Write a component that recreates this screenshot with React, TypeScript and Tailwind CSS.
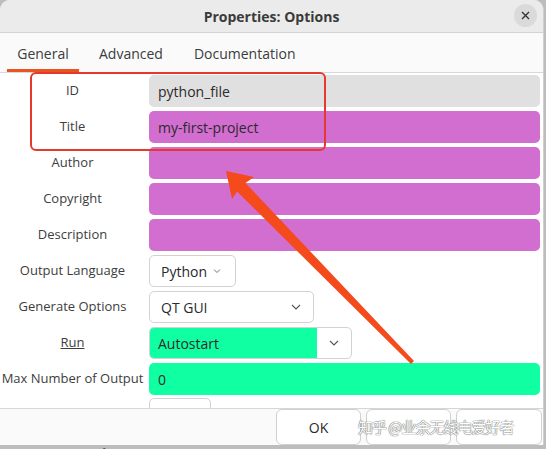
const labelFont = { fontFamily: '"Open Sans", "Noto Sans", sans-serif' };

function Chevron({ className = "" }: { className?: string }) {
  return (
    <svg width="10" height="6" viewBox="0 0 10 6" className={className}>
      <polyline points="1,1 5,5 9,1" fill="none" stroke="#555" strokeWidth="1.1" />
    </svg>
  );
}

function Row({ label, underline, children }: { label: string; underline?: boolean; children: React.ReactNode }) {
  return (
    <div className="flex h-[36px] items-center">
      <div className="w-[149px] shrink-0 pr-[4px] text-center text-[13px] text-[#3d3d3d]">
        <span className={underline ? "underline" : ""}>{label}</span>
      </div>
      <div className="flex h-full flex-1 items-center pr-[3px]">{children}</div>
    </div>
  );
}

function Field({ value, color }: { value?: string; color: string }) {
  return (
    <div className={`flex h-[32px] w-full items-center rounded-[5px] px-[9px] text-[14px] text-[#2a2a2a] ${color}`}>
      {value}
    </div>
  );
}

export default function App() {
  return (
    <div className="relative h-[449px] w-[546px] overflow-hidden bg-[#bdbdbd]" style={labelFont}>
      <div className="flex h-[445px] w-[544px] flex-col overflow-hidden rounded-t-[10px] border-r border-[#cfcfcf] bg-[#fafafa]">
        {/* title bar */}
        <div className="relative flex h-[33px] shrink-0 items-center justify-center border-b border-[#d2d2d2] bg-[#ebebeb]">
          <span className="text-[14px] font-bold text-[#3a3a3a]">Properties: Options</span>
          <div className="absolute right-[6px] top-[4px] flex h-[23px] w-[23px] items-center justify-center rounded-full bg-[#dadada]">
            <svg width="9" height="9" viewBox="0 0 9 9">
              <path d="M1 1 L8 8 M8 1 L1 8" stroke="#333" strokeWidth="1.4" />
            </svg>
          </div>
        </div>

        {/* tabs */}
        <div className="flex h-[40px] shrink-0 items-stretch border-b border-[#d8d8d8] bg-[#fafafa] text-[14px] text-[#3c3c3c]">
          <div className="ml-[7px] flex w-[72px] items-center justify-center border-b-[3px] border-[#e95420] pt-[4px]">General</div>
          <div className="ml-[20px] flex items-center pt-[1px]">Advanced</div>
          <div className="ml-[31px] flex items-center pt-[1px]">Documentation</div>
        </div>

        {/* form */}
        <div className="h-[335px] shrink-0 overflow-hidden bg-white">
          <Row label="ID">
            <Field value="python_file" color="bg-[#e0e0e0]" />
          </Row>
          <Row label="Title">
            <Field value="my-first-project" color="bg-[#d26ed0]" />
          </Row>
          <Row label="Author">
            <Field color="bg-[#d26ed0]" />
          </Row>
          <Row label="Copyright">
            <Field color="bg-[#d26ed0]" />
          </Row>
          <Row label="Description">
            <Field color="bg-[#d26ed0]" />
          </Row>
          <Row label="Output Language">
            <div className="flex h-[32px] w-[87px] items-center gap-[5px] rounded-[5px] border border-[#d2d2d2] bg-white pl-[11px] text-[14px] text-[#2a2a2a]">
              Python
              <Chevron className="scale-75" />
            </div>
          </Row>
          <Row label="Generate Options">
            <div className="flex h-[32px] w-[165px] items-center justify-between rounded-[5px] border border-[#d2d2d2] bg-white pl-[11px] pr-[12px] text-[14px] text-[#2a2a2a]">
              QT GUI
              <Chevron />
            </div>
          </Row>
          <Row label="Run" underline>
            <div className="flex h-[32px] w-[203px] overflow-hidden rounded-[5px] border border-[#d2d2d2] bg-white text-[14px] text-[#2a2a2a]">
              <div className="flex w-[167px] items-center bg-[#10ffa3] pl-[8px]">Autostart</div>
              <div className="flex flex-1 items-center justify-center">
                <Chevron />
              </div>
            </div>
          </Row>
          <Row label="Max Number of Output">
            <Field value="0" color="bg-[#10ffa3]" />
          </Row>
          <div className="flex pt-[1px]">
            <div className="w-[149px]" />
            <div className="h-[32px] w-[62px] rounded-[5px] border border-[#d2d2d2] bg-white" />
          </div>
        </div>

        {/* action bar */}
        <div className="relative flex h-[37px] shrink-0 items-center justify-end gap-[5px] border-t border-[#d6d6d6] bg-[#fafafa] pr-[1px]">
          <div className="flex h-[36px] w-[85px] items-center justify-center rounded-[6px] border border-[#d0d0d0] bg-white text-[14px] text-[#2a2a2a]">
            OK
          </div>
          <div className="h-[36px] w-[85px] rounded-[6px] border border-[#d0d0d0] bg-white" />
          <div className="h-[36px] w-[86px] rounded-[6px] border border-[#d0d0d0] bg-white" />
          <span
            className="absolute left-[358px] top-[7px] text-[15px] tracking-[-1px] text-white"
            style={{ fontFamily: '"Noto Sans CJK SC", sans-serif', textShadow: "0 0 1px #555, 0 0 1px #555" }}
          >
            知乎 @业余无线电爱好者
          </span>
        </div>
      </div>
      <div className="absolute left-[86px] top-[444px] text-[13px] font-bold text-[#555]">Value</div>

      {/* annotation overlay */}
      <div className="absolute left-[30px] top-[72px] h-[79px] w-[296px] rounded-[6px] border-[2.5px] border-[#e5392b]" />
      <svg className="absolute left-0 top-0" width="546" height="449" viewBox="0 0 546 449">
        <polygon
          points="226,171 254,177 245.5,183 414,361 411,364 237,191.5 232,199"
          fill="#f44a1c"
        />
      </svg>
    </div>
  );
}
